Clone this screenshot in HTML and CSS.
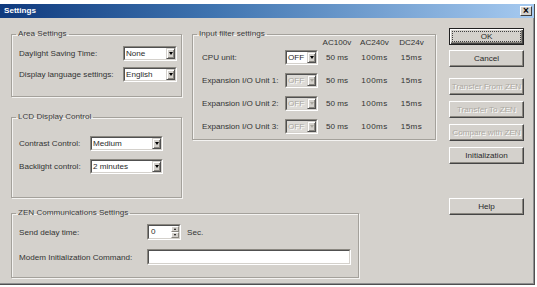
FILE: index.html
```html
<!DOCTYPE html>
<html>
<head>
<meta charset="utf-8">
<link rel="stylesheet" href="styles.css">
</head>
<body>
<div class="window">
  <div class="titlebar">
    <span class="title">Settings</span>
    <span class="close">×</span>
  </div>
  <div class="content">
    <div class="leftcol">
      <fieldset class="group area">
        <legend>Area Settings</legend>
        <div class="gbody">
          <div class="row">
            <span class="lbl">Daylight Saving Time:</span>
            <div class="select"><div class="field"><span class="val">None</span><span class="arrow"></span></div></div>
          </div>
          <div class="row">
            <span class="lbl">Display language settings:</span>
            <div class="select"><div class="field"><span class="val">English</span><span class="arrow"></span></div></div>
          </div>
        </div>
      </fieldset>
      <fieldset class="group lcd">
        <legend>LCD Display Control</legend>
        <div class="gbody">
          <div class="row">
            <span class="lbl">Contrast Control:</span>
            <div class="select"><div class="field"><span class="val">Medium</span><span class="arrow"></span></div></div>
          </div>
          <div class="row">
            <span class="lbl">Backlight control:</span>
            <div class="select"><div class="field"><span class="val">2 minutes</span><span class="arrow"></span></div></div>
          </div>
        </div>
      </fieldset>
    </div>

    <fieldset class="group filter">
      <legend>Input filter settings</legend>
      <div class="gbody">
        <div class="fhead">
          <span class="c3">AC100v</span>
          <span class="c4">AC240v</span>
          <span class="c5">DC24v</span>
        </div>
        <div class="ftable">
          <span class="lbl">CPU unit:</span>
          <div class="select"><div class="field"><span class="val">OFF</span><span class="arrow"></span></div></div>
          <span class="num">50 ms</span><span class="num sp">100ms</span><span class="num sp">15ms</span>

          <span class="lbl">Expansion I/O Unit 1:</span>
          <div class="select disabled"><div class="field"><span class="val">OFF</span><span class="arrow"></span></div></div>
          <span class="num">50 ms</span><span class="num sp">100ms</span><span class="num sp">15ms</span>

          <span class="lbl">Expansion I/O Unit 2:</span>
          <div class="select disabled"><div class="field"><span class="val">OFF</span><span class="arrow"></span></div></div>
          <span class="num">50 ms</span><span class="num sp">100ms</span><span class="num sp">15ms</span>

          <span class="lbl">Expansion I/O Unit 3:</span>
          <div class="select disabled"><div class="field"><span class="val">OFF</span><span class="arrow"></span></div></div>
          <span class="num">50 ms</span><span class="num sp">100ms</span><span class="num sp">15ms</span>
        </div>
      </div>
    </fieldset>

    <div class="buttons">
      <div class="btn default">OK</div>
      <div class="btn">Cancel</div>
      <div class="btn disabled gap-lg">Transfer From ZEN</div>
      <div class="btn disabled">Transfer To ZEN</div>
      <div class="btn disabled">Compare with ZEN</div>
      <div class="btn">Initialization</div>
      <div class="btn help">Help</div>
    </div>

    <fieldset class="group zen">
      <legend>ZEN Communications Settings</legend>
      <div class="gbody">
        <div class="row tall">
          <span class="lbl">Send delay time:</span>
          <div class="spin"><div class="field"><span class="val">0</span><span class="spinbtns"><span class="sb up"></span><span class="sb down"></span></span></div></div>
          <span class="unit">Sec.</span>
        </div>
        <div class="row tall">
          <span class="lbl">Modem Initialization Command:</span>
          <div class="textbox"><div class="field"></div></div>
        </div>
      </div>
    </fieldset>
  </div>
</div>
</body>
</html>
```

FILE: styles.css
```css
* { box-sizing: border-box; }
html, body { margin: 0; padding: 0; }
body {
  background: #ffffff;
  font-family: "Liberation Sans", Arial, sans-serif;
  font-size: 8.1px;
  color: #333333;
}

.window {
  margin-top: 4px;
  width: 535px;
  height: 281px;
  background: #d4d1cc;
  border-right: 1px solid #505050;
  border-bottom: 1px solid #505050;
  box-shadow: inset -1px -1px #909090;
}

.titlebar {
  height: 14px;
  background: linear-gradient(to right, #0f3a7e, #3f74b0 40%, #a6caf0);
  display: flex;
  align-items: center;
  justify-content: space-between;
  padding: 0 2px 0 4px;
}
.title {
  color: #fff;
  font-weight: bold;
  font-size: 8.1px;
  line-height: 10px;
}
.close {
  width: 12px;
  height: 10px;
  background: #d4d1cc;
  border: 1px solid;
  border-color: #fff #404040 #404040 #fff;
  display: flex;
  align-items: center;
  justify-content: center;
  font-size: 10px;
  font-weight: bold;
  line-height: 8px;
  color: #000;
}

.content {
  display: grid;
  grid-template-columns: 171px 10px 244px 13px 75px;
  grid-template-rows: auto auto;
  row-gap: 10px;
  padding: 11px 0 0 11px;
}

.leftcol {
  grid-column: 1;
  grid-row: 1;
  display: flex;
  flex-direction: column;
  gap: 15px;
}

fieldset.group {
  margin: 0;
  padding: 0;
  min-width: 0;
  border: 1px solid #a4a19b;
  box-shadow: inset 1px 1px #f4f3f1, 1px 1px #f4f3f1;
}
legend {
  margin-left: 4px;
  padding: 0 2px;
  line-height: 10px;
  font-size: 8.1px;
  color: #3a3a3a;
}

.row {
  display: flex;
  align-items: center;
  height: 15px;
}
.row.tall { height: 16px; }
.lbl { flex: none; white-space: nowrap; }

/* Area settings */
.area .gbody {
  display: flex;
  flex-direction: column;
  gap: 6px;
  padding: 7px 4px 14px 7px;
}
.area .lbl { width: 104px; }
.area .select { width: 54px; }

/* LCD */
.lcd .gbody {
  display: flex;
  flex-direction: column;
  gap: 8px;
  padding: 14px 0 23px 7px;
}
.lcd .lbl { width: 71px; }
.lcd .select { width: 73px; }

/* Input filter */
.filter {
  grid-column: 3;
  grid-row: 1;
  align-self: start;
}
.filter .gbody { padding: 0 0 5px 9px; }
.fhead, .ftable {
  display: grid;
  grid-template-columns: 83px 33px 38px 37px 37px;
}
.fhead {
  height: 8px;
  line-height: 8px;
  margin-bottom: 3px;
}
.fhead span { text-align: center; }
.fhead .c3 { grid-column: 3; }
.fhead .c4 { grid-column: 4; }
.fhead .c5 { grid-column: 5; }
.ftable {
  grid-auto-rows: 15px;
  row-gap: 8px;
  align-items: center;
}
.ftable .select { width: 33px; }
.num { text-align: center; white-space: nowrap; }
.num.sp { letter-spacing: 0.4px; }

/* Selects / fields */
.select, .spin, .textbox {
  height: 100%;
  border: 1px solid;
  border-color: #8a8780 #ffffff #ffffff #8a8780;
  flex: none;
}
.field {
  height: 100%;
  display: flex;
  background: #fff;
  border: 1px solid;
  border-color: #505050 #d4d1cc #d4d1cc #505050;
}
.val {
  flex: 1;
  padding-left: 1px;
  line-height: 11px;
  white-space: nowrap;
  overflow: hidden;
  color: #2a2a2a;
}
.arrow {
  flex: none;
  width: 9px;
  background: #d4d1cc;
  border: 1px solid;
  border-color: #d4d1cc #505050 #505050 #d4d1cc;
  box-shadow: inset 1px 1px #fff, inset -1px -1px #8a8780;
  display: flex;
  align-items: center;
  justify-content: center;
}
.arrow::before {
  content: "";
  border-left: 2px solid transparent;
  border-right: 2px solid transparent;
  border-top: 3px solid #000;
}
.select.disabled .field { background: #dcdad6; }
.select.disabled .val { color: #aaa79f; text-shadow: 1px 1px #fff; }
.select.disabled .arrow::before { border-top-color: #aaa79f; }

/* Buttons */
.buttons {
  grid-column: 5;
  grid-row: 1 / 3;
  display: flex;
  flex-direction: column;
  gap: 6px;
  margin-top: -1px;
}
.btn {
  height: 17px;
  background: #d4d1cc;
  border: 1px solid;
  border-color: #fff #454545 #454545 #fff;
  box-shadow: inset -1px -1px #8a8780;
  display: flex;
  align-items: center;
  justify-content: center;
  white-space: nowrap;
  color: #2a2a2a;
}
.btn.default {
  border-color: #202020;
  box-shadow: inset 1px 1px #fff, inset -1px -1px #454545, inset -2px -2px #8a8780;
  outline: 1px dotted #404040;
  outline-offset: -4px;
  margin-bottom: -1px;
}
.btn.disabled {
  color: #aca9a2;
  text-shadow: 1px 1px #fff;
}
.btn.gap-lg { margin-top: 5px; }
.btn.help { margin-top: 28px; }

/* ZEN */
.zen {
  grid-column: 1 / 4;
  grid-row: 2;
  width: 348px;
  justify-self: start;
  align-self: start;
}
.zen .gbody {
  display: flex;
  flex-direction: column;
  gap: 9px;
  padding: 6px 0 12px 7px;
}
.zen .lbl { width: 128px; }
.spin { width: 34px; }
.spin .val { line-height: 12px; padding-left: 2px; }
.spinbtns {
  flex: none;
  width: 8px;
  display: flex;
  flex-direction: column;
}
.sb {
  flex: 1;
  background: #d4d1cc;
  border: 1px solid;
  border-color: #fff #8a8780 #8a8780 #fff;
  display: flex;
  align-items: center;
  justify-content: center;
}
.sb.up::before {
  content: "";
  border-left: 1.5px solid transparent;
  border-right: 1.5px solid transparent;
  border-bottom: 2px solid #000;
}
.sb.down::before {
  content: "";
  border-left: 1.5px solid transparent;
  border-right: 1.5px solid transparent;
  border-top: 2px solid #000;
}
.unit { margin-left: 6px; }
.textbox { width: 204px; }
```
